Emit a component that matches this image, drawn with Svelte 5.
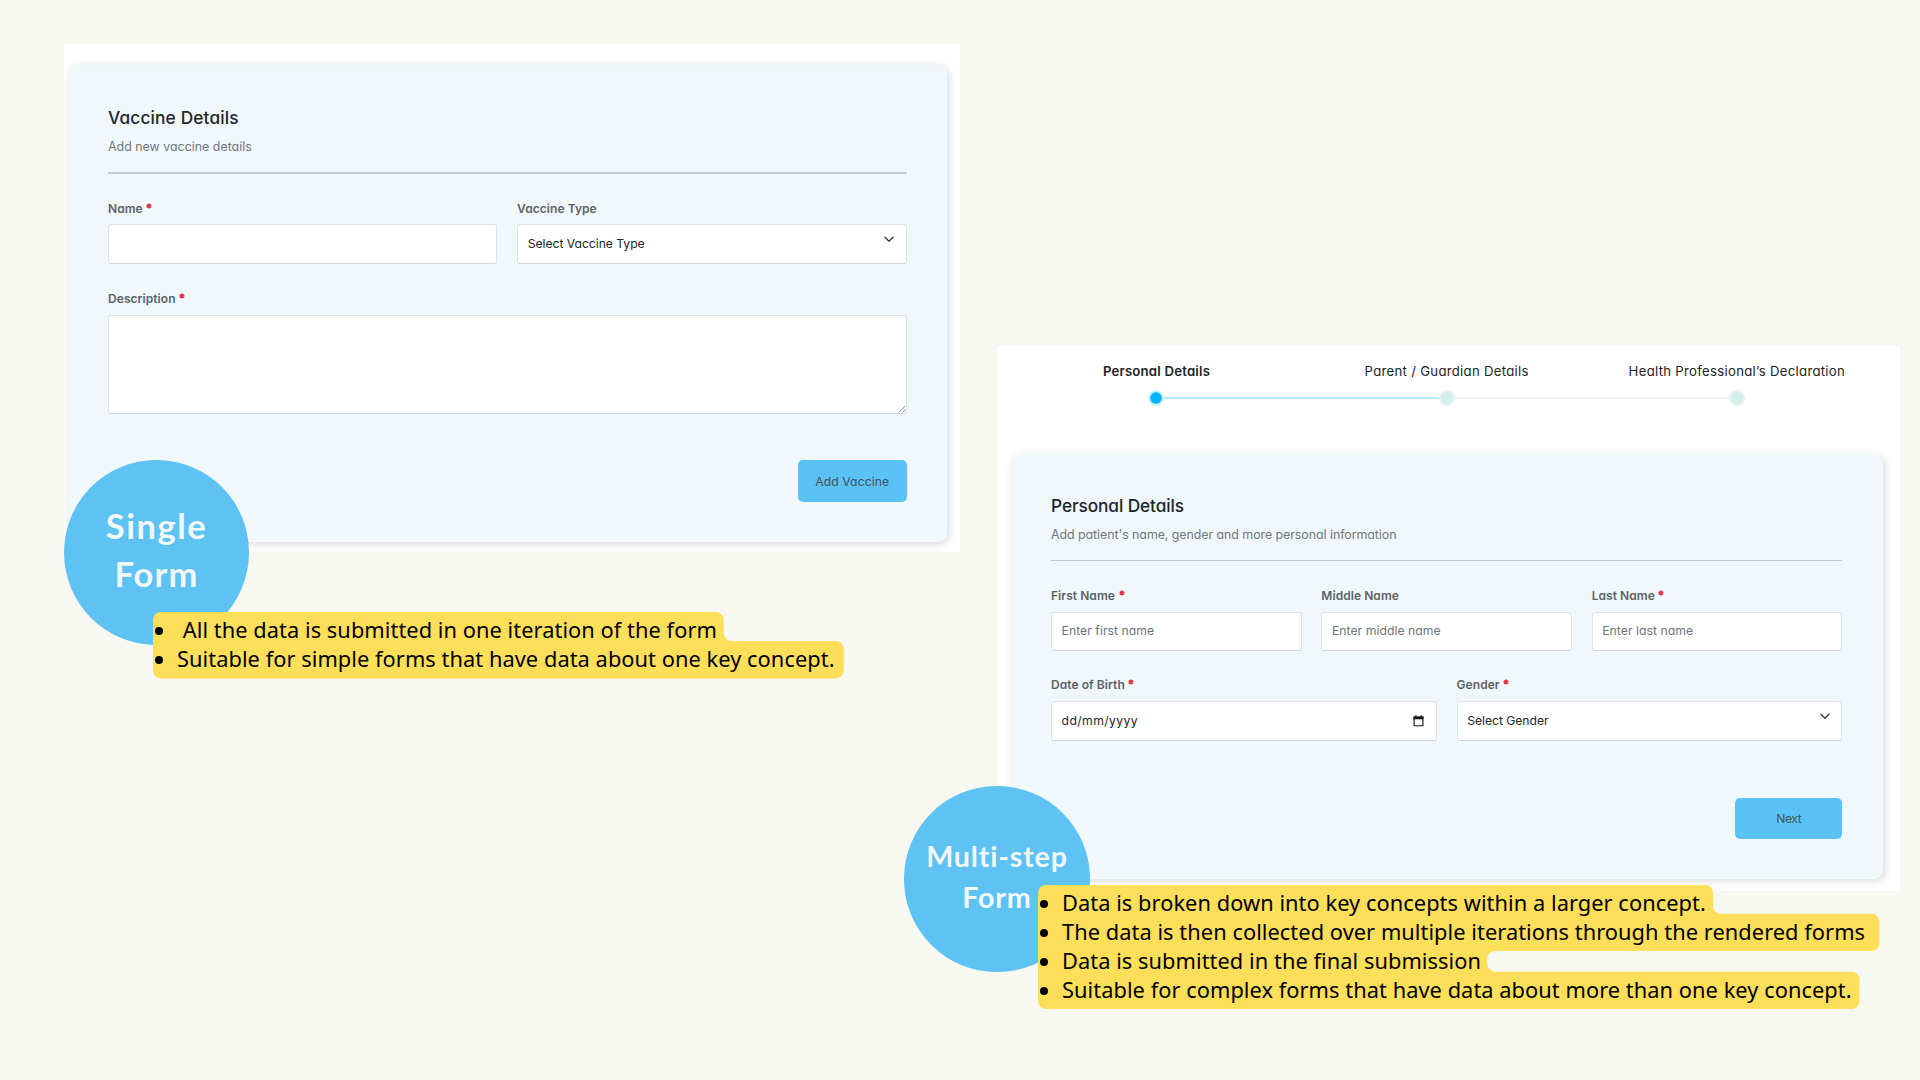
<script>
  const steps = [
    { label: 'Personal Details', active: true },
    { label: 'Parent / Guardian Details' },
    { label: 'Health Professional’s Declaration' }
  ];

  const singleNotes = [
    '\u00a0All the data is submitted in one iteration of the form',
    'Suitable for simple forms that have data about one key concept.'
  ];

  const multiNotes = [
    'Data is broken down into key concepts within a larger concept.',
    'The data is then collected over multiple iterations through the rendered forms',
    'Data is submitted in the final submission',
    'Suitable for complex forms that have data about more than one key concept.'
  ];
</script>

{#snippet label(text, required)}
  <span class="label">{text}{#if required}<span class="star"><svg viewBox="0 0 6 6"><path d="M3 .4v5.2M.7 1.7l4.6 2.6M5.3 1.7L.7 4.3" /></svg></span>{/if}</span>
{/snippet}

{#snippet field(name, required, value, kind)}
  <div class="field">
    {@render label(name, required)}
    <div class="control {kind}">
      <span class="value">{value}</span>
      {#if kind === 'select'}
        <svg class="chevron" viewBox="0 0 10 7"><path d="M1 1.2l4 4 4-4" /></svg>
      {:else if kind === 'date'}
        <svg class="calendar" viewBox="0 0 11 12">
          <path class="frame" d="M1.1 2.2h8.8v8.6H1.1z" />
          <path class="top" d="M.5 1.6h10v2.6H.5zM2.2.3h1.3v2H2.2zM7.5.3h1.3v2H7.5z" />
        </svg>
      {/if}
    </div>
  </div>
{/snippet}

<main class="canvas">
  <section class="panel single">
    <div class="card">
      <h2>Vaccine Details</h2>
      <p class="subtitle">Add new vaccine details</p>
      <hr />
      <div class="row two">
        {@render field('Name', true, '', 'text')}
        {@render field('Vaccine Type', false, 'Select Vaccine Type', 'select')}
      </div>
      <div class="field description">
        {@render label('Description', true)}
        <div class="control area">
          <svg class="grip" viewBox="0 0 8 8"><path d="M.8 7.5l6.5-6.5M4.4 7.5l3-3" /></svg>
        </div>
      </div>
      <button>Add Vaccine</button>
    </div>
  </section>

  <section class="panel multi">
    <ol class="steps">
      {#each steps as step}
        <li class:active={step.active}>
          <span class="step-name">{step.label}</span>
          <span class="track"><i class="dot"></i><i class="line"></i></span>
        </li>
      {/each}
    </ol>
    <div class="card">
      <h2>Personal Details</h2>
      <p class="subtitle">Add patient's name, gender and more personal information</p>
      <hr />
      <div class="row three">
        {@render field('First Name', true, 'Enter first name', 'text')}
        {@render field('Middle Name', false, 'Enter middle name', 'text')}
        {@render field('Last Name', true, 'Enter last name', 'text')}
      </div>
      <div class="row two second">
        {@render field('Date of Birth', true, 'dd/mm/yyyy', 'date')}
        {@render field('Gender', true, 'Select Gender', 'select')}
      </div>
      <button>Next</button>
    </div>
  </section>

  <div class="badge badge-single"><span>Single</span><span>Form</span></div>
  <div class="badge badge-multi"><span>Multi-step</span><span>Form</span></div>

  <div class="notes notes-single">
    <svg class="highlight" width="691" height="67" viewBox="0 0 691 67">
      <path d="M8 0H562.7a8 8 0 0 1 8 8V21a8 8 0 0 0 8 8H682.7a8 8 0 0 1 8 8V58.4a8 8 0 0 1-8 8H8a8 8 0 0 1-8-8V8a8 8 0 0 1 8-8z" />
    </svg>
    <ul>
      {#each singleNotes as note}<li>{note}</li>{/each}
    </ul>
  </div>

  <div class="notes notes-multi">
    <svg class="highlight" width="842" height="125" viewBox="0 0 842 125">
      <path d="M8 0H667a8 8 0 0 1 8 8V20.8a8 8 0 0 0 8 8H833.5a8 8 0 0 1 8 8V58a8 8 0 0 1-8 8H457.2a8 8 0 0 0-8 8V78.7a8 8 0 0 0 8 8H813.5a8 8 0 0 1 8 8V116a8 8 0 0 1-8 8H8a8 8 0 0 1-8-8V8a8 8 0 0 1 8-8z" />
    </svg>
    <ul>
      {#each multiNotes as note}<li>{note}</li>{/each}
    </ul>
  </div>
</main>

<style>
  :global(body) {
    margin: 0;
    overflow: hidden;
  }

  .canvas {
    position: relative;
    width: 1920px;
    height: 1080px;
    overflow: hidden;
    background: #f7f8f2;
    font-family: Inter, "Open Sans", sans-serif;
    font-feature-settings: "cv11";
  }

  .panel {
    position: absolute;
    box-sizing: border-box;
    background: #fff;
    overflow: hidden;
  }

  .single {
    left: 64px;
    top: 44px;
    width: 895.5px;
    height: 508px;
    padding: 20.6px 12.6px 0 3.5px;
  }

  .multi {
    left: 997px;
    top: 346px;
    width: 903px;
    height: 544.7px;
    padding: 15.3px 17.5px 0 14px;
  }

  .card {
    display: flex;
    flex-direction: column;
    box-sizing: border-box;
    background: #f0f8fc;
    border-radius: 9px;
    box-shadow: 2px 2px 9px rgba(0, 0, 0, 0.15);
  }

  .single .card {
    height: 477.6px;
    padding: 41.6px 40.4px 0 40.5px;
  }

  .multi .card {
    height: 425px;
    margin-top: 48.3px;
    padding: 40px 40.1px 0 40px;
  }

  h2 {
    margin: 0;
    font-size: 17.3px;
    line-height: 24px;
    font-weight: 500;
    color: #212529;
    white-space: nowrap;
  }

  .single h2 {
    letter-spacing: 0.15px;
  }

  .multi h2 {
    letter-spacing: -0.1px;
  }

  .subtitle {
    margin: 6.6px 0 0;
    font-size: 12.4px;
    line-height: 20px;
    letter-spacing: -0.05px;
    color: #6f777d;
    white-space: nowrap;
  }

  .single .subtitle {
    letter-spacing: 0.01px;
  }

  hr {
    box-sizing: border-box;
    width: 100%;
    height: 1px;
    margin: 15.6px 0 0;
    border: 0;
    background: #bdc7cb;
  }

  .single hr {
    height: 2px;
    background: #c4cdd1;
  }

  .row {
    display: grid;
    margin-top: 25.2px;
  }

  .two {
    grid-template-columns: 1fr 1fr;
    column-gap: 19.7px;
  }

  .three {
    grid-template-columns: 1fr 1fr 1fr;
    column-gap: 19.6px;
  }

  .multi .row {
    margin-top: 25.8px;
  }

  .multi .second {
    margin-top: 25.2px;
  }

  .field {
    display: flex;
    flex-direction: column;
    gap: 6.5px;
  }

  .description {
    margin-top: 26.2px;
  }

  .label {
    display: flex;
    height: 18px;
    font-size: 12px;
    line-height: 18px;
    font-weight: 600;
    letter-spacing: 0.06px;
    color: #5c6266;
    white-space: nowrap;
  }

  .star {
    display: flex;
    padding: 3px 0 0 3.6px;
  }

  .star svg {
    width: 6px;
    height: 6px;
    fill: none;
    stroke: #dc3545;
    stroke-width: 1.6;
  }

  .control {
    display: flex;
    align-items: center;
    box-sizing: border-box;
    height: 40.2px;
    padding: 0 11.6px 0 9.6px;
    background: #fff;
    border: 1px solid #dde3ea;
    border-bottom-color: #cfd6dd;
    border-radius: 3px;
  }

  .three .control {
    height: 39.4px;
  }

  .value {
    flex: 1;
    font-size: 12.2px;
    line-height: 20px;
    letter-spacing: -0.04px;
    color: #212529;
    white-space: nowrap;
  }

  .text .value {
    color: #6c757d;
    letter-spacing: 0.04px;
  }

  .date .value {
    letter-spacing: 0.4px;
  }

  .area {
    align-items: flex-end;
    justify-content: flex-end;
    height: 99px;
    padding: 0;
  }

  .chevron {
    width: 10px;
    height: 7px;
    margin-bottom: 8.4px;
    fill: none;
    stroke: #343a40;
    stroke-width: 1.4;
    stroke-linecap: round;
    stroke-linejoin: round;
  }

  .calendar {
    width: 11px;
    height: 12px;
  }

  .frame {
    fill: none;
    stroke: #111;
    stroke-width: 1.1;
  }

  .top {
    fill: #111;
  }

  .grip {
    width: 8px;
    height: 8px;
    fill: none;
    stroke: #777;
    stroke-width: 0.9;
  }

  button {
    align-self: flex-end;
    width: 108.6px;
    height: 42px;
    margin-top: 46.4px;
    padding: 0;
    border: 0;
    border-radius: 5px;
    background: #5bc2f6;
    color: #46525a;
    font: inherit;
    font-size: 12.2px;
    font-feature-settings: inherit;
    letter-spacing: 0.08px;
  }

  .multi button {
    width: 107.2px;
    height: 41px;
    margin-top: 57.2px;
    letter-spacing: -0.4px;
  }

  .steps {
    display: grid;
    grid-template-columns: repeat(3, 290.2px);
    margin: 0;
    padding: 0 0 0 0.4px;
    list-style: none;
  }

  .steps li {
    display: flex;
    flex-direction: column;
    align-items: center;
    gap: 8.6px;
  }

  .step-name {
    font-size: 13.2px;
    line-height: 20px;
    letter-spacing: 0.28px;
    color: #212529;
    white-space: nowrap;
  }

  .active .step-name {
    font-weight: 600;
    letter-spacing: 0.2px;
  }

  .track {
    display: flex;
    align-items: center;
    width: 16px;
    height: 16px;
  }

  .dot {
    flex: none;
    box-sizing: border-box;
    width: 16px;
    height: 16px;
    border: 2px solid #e4f3f1;
    border-radius: 50%;
    background: #d3eeeb;
  }

  .line {
    flex: none;
    width: 274.2px;
    height: 2px;
    background: #f0f1f1;
  }

  .steps li:last-child .line {
    display: none;
  }

  .active .dot {
    border-color: #c5f1fa;
    background: #00b2ff;
    background-clip: padding-box;
  }

  .active .line {
    background: #b5e7fd;
  }

  .badge {
    position: absolute;
    display: flex;
    flex-direction: column;
    align-items: center;
    box-sizing: border-box;
    width: 185.4px;
    height: 185.4px;
    border-radius: 50%;
    background: #5ec2f3;
    color: #f0f8fc;
    font-family: Lato, sans-serif;
    font-weight: 700;
    font-variant-ligatures: none;
    white-space: nowrap;
  }

  .badge-single {
    left: 63.8px;
    top: 459.8px;
    padding-top: 42.2px;
    font-size: 34.5px;
    line-height: 47.7px;
    letter-spacing: 1.1px;
  }

  .badge-single span:first-child {
    letter-spacing: 1.5px;
  }

  .badge-multi {
    left: 904.3px;
    top: 786.2px;
    padding-top: 50px;
    font-size: 28.7px;
    line-height: 40.9px;
    letter-spacing: 0.8px;
  }

  .notes {
    position: absolute;
    font-family: "Noto Sans", "Open Sans", sans-serif;
    font-size: 21.8px;
    line-height: 29px;
    letter-spacing: 0.055px;
    color: #000;
    white-space: nowrap;
  }

  .notes-single {
    left: 153px;
    top: 612px;
  }

  .notes-multi {
    left: 1038px;
    top: 885px;
  }

  .highlight {
    position: absolute;
    left: 0;
    top: 0;
    fill: #ffde59;
  }

  ul {
    position: relative;
    margin: 0;
    padding: 3.4px 0 0 2px;
    list-style: none;
  }

  .notes li {
    display: flex;
    align-items: center;
    gap: 14px;
    height: 29px;
  }

  .notes li::before {
    content: "";
    flex: none;
    width: 8px;
    height: 8px;
    margin-top: 3px;
    border-radius: 50%;
    background: #000;
  }
</style>
